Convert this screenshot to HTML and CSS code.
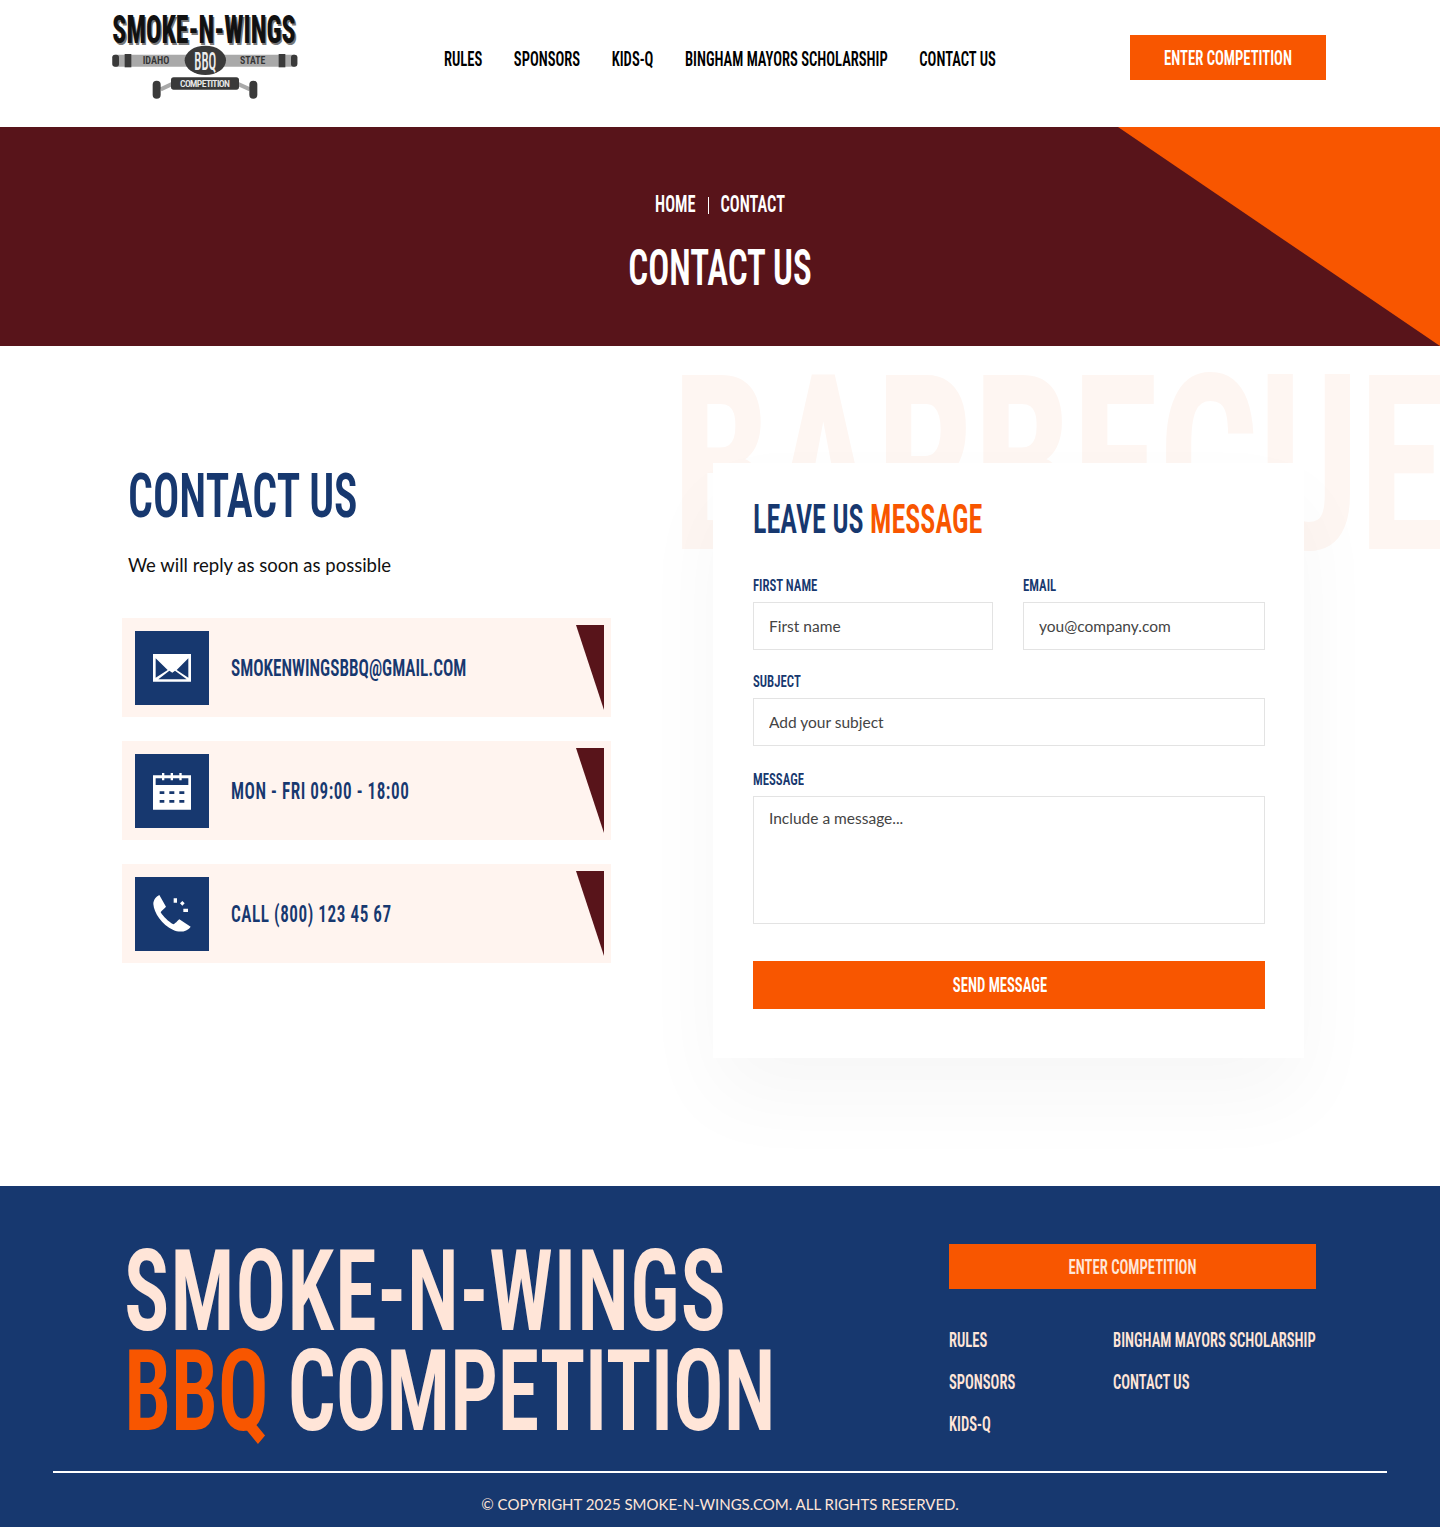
FILE: index.html
```html
<!DOCTYPE html>
<html lang="en">
<head>
<meta charset="utf-8">
<title>Contact Us</title>
<link rel="stylesheet" href="styles.css">
</head>
<body>
<header class="site-header">
  <a class="logo" href="#">
    <svg width="240" height="110" viewBox="0 0 720 330">
      <text class="logo-title logo-shadow" x="71" y="134" textLength="550" lengthAdjust="spacingAndGlyphs">SMOKE-N-WINGS</text>
      <text class="logo-title" x="67" y="130" textLength="550" lengthAdjust="spacingAndGlyphs">SMOKE-N-WINGS</text>
      <rect x="67" y="164" width="555" height="36" rx="10" fill="#a9a9a9"/>
      <rect x="67" y="164" width="20" height="36" rx="8" fill="#3a3a3a"/>
      <rect x="104" y="162" width="20" height="40" fill="#3a3a3a"/>
      <rect x="566" y="162" width="20" height="40" fill="#3a3a3a"/>
      <rect x="603" y="164" width="19" height="36" rx="8" fill="#3a3a3a"/>
      <path class="logo-arm" d="M212 268 L250 250 M440 250 L480 268"/>
      <rect x="188" y="242" width="24" height="54" rx="12" fill="#3a3a3a"/>
      <rect x="478" y="242" width="24" height="54" rx="12" fill="#3a3a3a"/>
      <ellipse cx="346" cy="181" rx="62" ry="44" fill="#3a3a3a"/>
      <rect x="243" y="232" width="204" height="37" rx="8" fill="#3a3a3a"/>
      <text class="logo-small" x="158" y="193" textLength="80" lengthAdjust="spacingAndGlyphs">IDAHO</text>
      <text class="logo-small" x="450" y="193" textLength="76" lengthAdjust="spacingAndGlyphs">STATE</text>
      <text class="logo-bbq" x="313" y="209" textLength="66" lengthAdjust="spacingAndGlyphs">BBQ</text>
      <text class="logo-comp" x="270" y="261" textLength="150" lengthAdjust="spacing">COMPETITION</text>
    </svg>
  </a>
  <nav class="main-nav">
    <a href="#">RULES</a>
    <a href="#">SPONSORS</a>
    <a href="#">KIDS-Q</a>
    <a href="#">BINGHAM MAYORS SCHOLARSHIP</a>
    <a href="#">CONTACT US</a>
  </nav>
  <a class="btn header-btn" href="#"><span>ENTER COMPETITION</span></a>
</header>

<section class="hero">
  <div class="crumbs"><span>HOME</span><i class="crumb-sep"></i><span>CONTACT</span></div>
  <h1 class="hero-title">CONTACT US</h1>
</section>

<main class="contact">
  <div class="ghost-word" aria-hidden="true">BARBECUE</div>
  <div class="contact-info">
    <h2 class="info-title">CONTACT US</h2>
    <p class="info-sub">We will reply as soon as possible</p>
    <ul class="info-list">
      <li class="info-card">
        <span class="info-icon">
          <svg width="74" height="74" viewBox="15 33 222 222">
            <path class="white" d="M69 102H183V185H69Z"/>
            <path class="navy" d="M77 115 113 150 77 173ZM175 115 140 150 175 173ZM85 178 118 152 127 158 135 152 170 178Z"/>
          </svg>
        </span>
        <span class="info-text">SMOKENWINGSBBQ@GMAIL.COM</span>
      </li>
      <li class="info-card">
        <span class="info-icon">
          <svg width="74" height="74" viewBox="15 27 222 222">
            <path class="white" d="M69 91H183V194H69Z"/>
            <path class="navy" d="M77 100H175V120H77Z"/>
            <path class="white" d="M96 84h7v22h-7ZM122 84h7v22h-7ZM148 84h7v22h-7Z"/>
            <path class="navy" d="M89 139h14v8H89ZM118 139h15v8h-15ZM148 139h15v8h-15ZM89 165h14v8H89ZM118 165h15v8h-15ZM148 165h15v8h-15Z"/>
          </svg>
        </span>
        <span class="info-text info-text-digits">MON - FRI 09:00 - 18:00</span>
      </li>
      <li class="info-card">
        <span class="info-icon">
          <svg width="74" height="74" viewBox="15 21 222 222">
            <path class="white" d="M88 75C78 80 70 90 70 102C72 128 95 165 130 180C145 187 170 188 182 170L148 148C143 152 135 162 130 163C115 155 100 140 92 127C94 122 105 115 108 110Z"/>
            <path class="white" d="M131 85h10v13h-10ZM157 93l7 7-7 7-7-7ZM160 116h14v10h-14Z"/>
          </svg>
        </span>
        <span class="info-text info-text-digits">CALL (800) 123 45 67</span>
      </li>
    </ul>
  </div>

  <form class="form-card">
    <h2 class="form-title">LEAVE US <em>MESSAGE</em></h2>
    <div class="form-row">
      <label class="field field-first"><span>FIRST NAME</span><input type="text" placeholder="First name"></label>
      <label class="field field-email"><span>EMAIL</span><input type="text" placeholder="you@company.com"></label>
    </div>
    <label class="field field-subject"><span>SUBJECT</span><input type="text" placeholder="Add your subject"></label>
    <label class="field field-message"><span>MESSAGE</span><textarea placeholder="Include a message..."></textarea></label>
    <button class="btn send-btn" type="button"><span>SEND MESSAGE</span></button>
  </form>
</main>

<footer class="site-footer">
  <div class="footer-top">
    <div class="footer-brand">
      <div class="brand-line brand-one">SMOKE-N-WINGS</div>
      <div class="brand-line brand-two"><em>BBQ</em> COMPETITION</div>
    </div>
    <div class="footer-side">
      <a class="btn footer-btn" href="#"><span>ENTER COMPETITION</span></a>
      <div class="footer-links">
        <a href="#">RULES</a><a href="#">BINGHAM MAYORS SCHOLARSHIP</a>
        <a href="#">SPONSORS</a><a href="#">CONTACT US</a>
        <a href="#">KIDS-Q</a>
      </div>
    </div>
  </div>
  <div class="footer-bottom">© COPYRIGHT 2025 SMOKE-N-WINGS.COM. ALL RIGHTS RESERVED.</div>
</footer>
</body>
</html>
```
FILE: styles.css
```css
* { box-sizing: border-box; }
html, body { margin: 0; padding: 0; }
body { width: 1440px; height: 1527px; overflow: hidden; font-family: Lato, sans-serif; background: #fff; color: #000; }
a { text-decoration: none; color: inherit; }
ul { list-style: none; margin: 0; padding: 0; }
em { font-style: normal; }

/* tall condensed display type: Roboto at its narrowest width, stretched vertically */
.main-nav a, .btn span, .crumbs span, .hero-title, .ghost-word, .info-title, .info-text, .form-title, .field span, .brand-line, .footer-links a {
  display: block;
  font-family: Roboto, sans-serif;
  font-stretch: 75%;
  font-weight: 600;
  white-space: nowrap;
  transform: scaleY(var(--tall, 1.36));
}

/* header */
.site-header { display: flex; align-items: flex-start; height: 127px; padding-left: 90px; padding-right: 114px; }
.logo { display: block; height: 110px; }
.logo svg { display: block; }
.logo-title { font-family: Roboto, sans-serif; font-stretch: 75%; font-weight: 800; font-size: 118px; fill: #111; }
.logo-shadow { fill: #777; }
.logo-small { font-family: Roboto, sans-serif; font-stretch: 75%; font-weight: 600; font-size: 35px; fill: #333; }
.logo-bbq { font-family: Roboto, sans-serif; font-stretch: 75%; font-weight: 500; font-size: 77px; fill: #eee; }
.logo-comp { font-family: Roboto, sans-serif; font-stretch: 75%; font-weight: 600; font-size: 29px; fill: #e8e8e8; }
.logo-arm { stroke: #a9a9a9; stroke-width: 12; fill: none; }
.main-nav { display: flex; gap: 31.6px; margin-left: 114px; margin-top: 47px; font-size: 14.6px; line-height: 24px; }
.btn { display: flex; align-items: center; justify-content: center; background: #f85600; color: #fff; font-size: 14.7px; border: 0; }
.header-btn { margin-left: auto; margin-top: 35px; width: 196px; height: 45px; }

/* hero */
.hero { height: 219px; background: #58141a; color: #fff; display: flex; flex-direction: column; align-items: center; position: relative; }
.hero::after { content: ""; position: absolute; top: 0; right: 0; width: 322px; height: 219px; background: #f85600; clip-path: polygon(0 0, 100% 0, 100% 100%); }
.crumbs { display: flex; align-items: center; gap: 12px; margin-top: 64px; font-size: 16.4px; line-height: 28px; --tall: 1.45; }
.crumb-sep { display: block; width: 1px; height: 17px; background: #fff; }
.hero-title { margin: 20px 0 0; font-size: 35px; line-height: 60px; --tall: 1.45; }

/* contact */
.contact { position: relative; height: 840px; overflow: hidden; display: flex; align-items: flex-start; }
.ghost-word { position: absolute; left: 672px; top: -25px; font-size: 176px; line-height: 290px; font-weight: 700; color: #fef6f2; --tall: 1.39; }
.contact-info { position: relative; width: 713px; padding: 114px 0 0 122px; }
.info-title { margin: 0 0 0 6px; font-size: 43.8px; line-height: 72px; color: #17386f; --tall: 1.41; }
.info-sub { margin: 20px 0 0 6px; font-size: 18.5px; line-height: 26px; color: #111; }
.info-list { display: flex; flex-direction: column; gap: 24px; margin-top: 40px; }
.info-card { position: relative; display: flex; align-items: center; gap: 22px; width: 489px; height: 99px; padding: 0 13px; background: #fff4ef; }
.info-card::after { content: ""; position: absolute; top: 7px; right: 7px; width: 28px; height: 85px; background: #58141a; clip-path: polygon(0 0, 100% 0, 100% 100%); }
.info-icon { display: block; flex: none; width: 74px; height: 74px; background: #17386f; }
.info-icon svg { display: block; }
.white { fill: #fff; }
.navy { fill: #17386f; }
.info-text { font-size: 17.2px; color: #17386f; --tall: 1.39; }
.info-text-digits { letter-spacing: 0.55px; }

/* form */
.form-card { position: relative; width: 591px; height: 595px; margin-top: 117px; padding: 31px 39px 0 40px; background: #fff; box-shadow: 0 40px 80px rgba(0,0,0,.035); }
.form-title { margin: 0; font-size: 28.2px; line-height: 52px; color: #17386f; --tall: 1.44; }
.form-title em { color: #f85600; }
.form-row { display: flex; gap: 30px; margin-top: 29px; }
.field { display: flow-root; }
.field span { font-size: 12.8px; line-height: 20px; color: #17386f; margin-top: 1px; margin-bottom: 6px; --tall: 1.33; }
.field input, .field textarea { display: block; width: 100%; border: 1px solid #e3e3e3; background: #fff; border-radius: 0; outline: 0; padding: 0 15px; font-family: Lato, sans-serif; font-size: 15.5px; color: #333; }
.field input { height: 48px; }
.field textarea { height: 128px; padding-top: 12px; resize: none; }
.field input::placeholder, .field textarea::placeholder { color: #444; opacity: 1; }
.field-first { width: 240px; }
.field-email { width: 242px; }
.field-subject { margin-top: 21px; }
.field-message { margin-top: 23px; }
.send-btn { width: 100%; height: 48px; margin-top: 37px; padding-right: 24px; }

/* footer */
.site-footer { height: 341px; background: #17386f; color: #ffe5d8; }
.footer-top { display: flex; height: 287px; border-bottom: 2px solid #fff; margin: 0 53px; }
.footer-brand { width: 896px; padding: 55px 0 0 71px; }
.brand-line { font-size: 85px; line-height: 100px; font-weight: 600; --tall: 1.34; }
.brand-one { letter-spacing: 0.75px; }
.brand-two { letter-spacing: -0.53px; }
.brand-line em { color: #f85600; }
.footer-side { width: 367px; padding-top: 58px; }
.footer-btn { height: 45px; color: #ffe5d8; }
.footer-links { display: grid; grid-template-columns: 164px auto; row-gap: 18px; margin-top: 39px; font-size: 14.6px; line-height: 24px; }
.footer-bottom { text-align: center; margin-top: 21px; font-size: 15px; line-height: 20px; color: #ffe5d8; }
```
